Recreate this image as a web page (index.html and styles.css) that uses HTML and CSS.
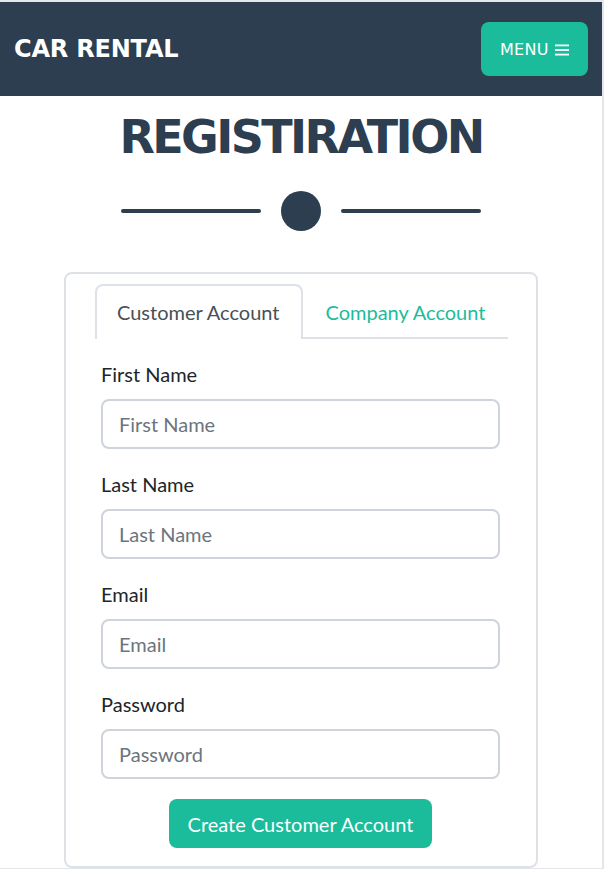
FILE: index.html
```html
<!DOCTYPE html>
<html lang="en">
<head>
<meta charset="utf-8">
<title>Car Rental - Registration</title>
<link rel="stylesheet" href="styles.css">
</head>
<body>
<div class="frame">
  <nav class="navbar">
    <a class="brand" href="#">CAR RENTAL</a>
    <button class="menu-btn" type="button">MENU
      <svg class="burger" width="14" height="12" viewBox="0 0 14 12" aria-hidden="true">
        <rect x="0" y="0.5" width="14" height="1.8" fill="#fff"/>
        <rect x="0" y="5.1" width="14" height="1.8" fill="#fff"/>
        <rect x="0" y="9.7" width="14" height="1.8" fill="#fff"/>
      </svg>
    </button>
  </nav>

  <h1 class="title">REGISTIRATION</h1>
  <div class="divider">
    <span class="divider-line"></span>
    <span class="divider-dot"></span>
    <span class="divider-line"></span>
  </div>

  <div class="card">
    <div class="tabs">
      <a class="tab active" href="#">Customer Account</a>
      <a class="tab" href="#">Company Account</a>
    </div>
    <form class="form">
      <div class="group">
        <label class="label">First Name</label>
        <input class="input" type="text" placeholder="First Name">
      </div>
      <div class="group">
        <label class="label">Last Name</label>
        <input class="input" type="text" placeholder="Last Name">
      </div>
      <div class="group">
        <label class="label">Email</label>
        <input class="input" type="email" placeholder="Email">
      </div>
      <div class="group">
        <label class="label">Password</label>
        <input class="input" type="password" placeholder="Password">
      </div>
      <div class="actions">
        <button class="submit" type="button">Create Customer Account</button>
      </div>
    </form>
  </div>
</div>
</body>
</html>
```
FILE: styles.css
```css
html, body {
  margin: 0;
  padding: 0;
  background: #fff;
}

body {
  font-family: Lato, "Open Sans", sans-serif;
  color: #212529;
}

.frame {
  height: 869px;
  box-sizing: border-box;
  border-top: 2px solid #e3e6ea;
  border-right: 2px solid #e3e6ea;
  border-bottom: 1px solid #e3e6ea;
  overflow: hidden;
}

.navbar {
  height: 94px;
  box-sizing: border-box;
  background: #2c3e50;
  display: flex;
  align-items: center;
  justify-content: space-between;
  padding: 0 14px;
}

.brand {
  font-family: "DejaVu Sans", sans-serif;
  font-weight: 700;
  font-size: 24px;
  line-height: 30px;
  letter-spacing: -0.2px;
  color: #fff;
  text-decoration: none;
}

.menu-btn {
  display: flex;
  align-items: center;
  gap: 6px;
  height: 54px;
  width: 107px;
  box-sizing: border-box;
  padding: 2px 0 0 19px;
  border: 0;
  border-radius: 8px;
  background: #1abc9c;
  color: #fff;
  font-family: "DejaVu Sans", sans-serif;
  font-size: 16px;
  line-height: 20px;
  letter-spacing: 0.3px;
}

.burger {
  display: block;
}

.title {
  margin: 13px 0 0;
  text-align: center;
  font-family: "DejaVu Sans", sans-serif;
  font-weight: 700;
  font-size: 46px;
  line-height: 56px;
  letter-spacing: -2.6px;
  color: #2c3e50;
}

.divider {
  display: flex;
  align-items: center;
  justify-content: center;
  gap: 20px;
  margin-top: 26px;
  height: 40px;
}

.divider-line {
  width: 140px;
  height: 4px;
  border-radius: 2px;
  background: #2c3e50;
}

.divider-dot {
  width: 40px;
  height: 40px;
  border-radius: 50%;
  background: #2c3e50;
}

.card {
  width: 474px;
  box-sizing: border-box;
  margin: 41px auto 0;
  border: 2px solid #dee2e6;
  border-radius: 8px;
  padding: 10px 28px 18px 29px;
}

.tabs {
  display: flex;
  border-bottom: 2px solid #dee2e6;
}

.tab {
  display: block;
  flex: none;
  white-space: nowrap;
  padding: 11px 22px 12px 20px;
  border: 2px solid transparent;
  border-bottom: 0;
  border-radius: 8px 8px 0 0;
  margin-bottom: -2px;
  font-size: 20px;
  line-height: 30px;
  color: #1abc9c;
  text-decoration: none;
}

.tab.active {
  border-color: #dee2e6;
  background: #fff;
  color: #495057;
}

.form {
  padding: 20px 8px 0 6px;
}

.group {
  margin-bottom: 20px;
}

.label {
  display: block;
  font-size: 20px;
  line-height: 30px;
  margin-bottom: 10px;
  color: #212529;
}

.input {
  display: block;
  width: 100%;
  box-sizing: border-box;
  height: 50px;
  padding: 8px 16px;
  border: 2px solid #ced4da;
  border-radius: 8px;
  font-family: Lato, sans-serif;
  font-size: 20px;
  line-height: 30px;
  color: #495057;
  background: #fff;
}

.input::placeholder {
  color: #6c757d;
}

.actions {
  display: flex;
  justify-content: center;
}

.submit {
  height: 49px;
  padding: 0 19px;
  border: 0;
  border-radius: 8px;
  background: #1abc9c;
  color: #fff;
  font-family: Lato, sans-serif;
  font-size: 20px;
  line-height: 30px;
}
```
